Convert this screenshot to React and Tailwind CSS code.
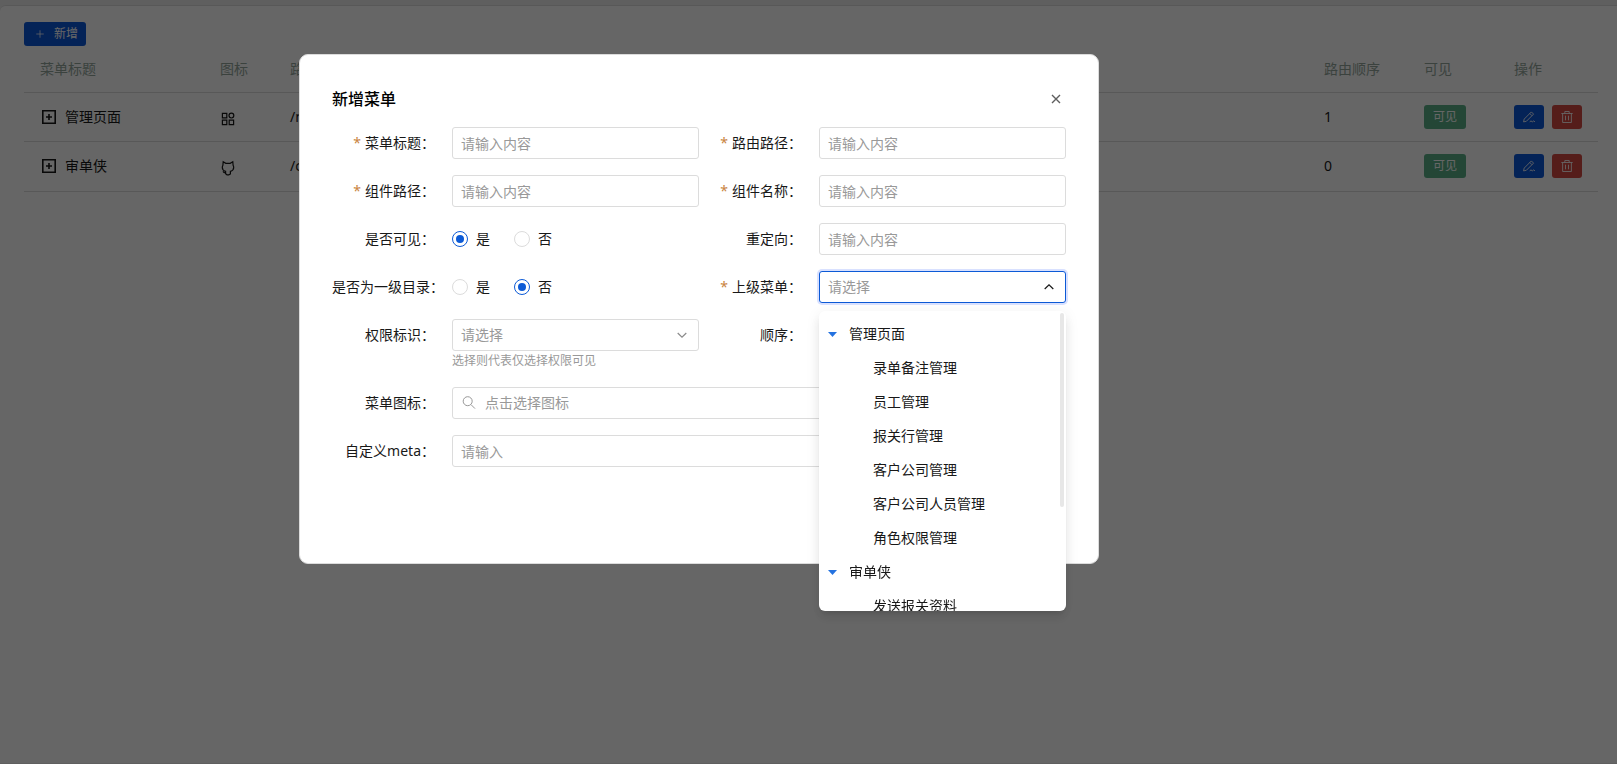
import { useState } from 'react'

const ROWS = [
  { title: '管理页面', icon: 'app', path: '/m', order: 1 },
  { title: '审单侠', icon: 'cat', path: '/c', order: 0 },
]

const TREE = [
  {
    label: '管理页面',
    children: ['录单备注管理', '员工管理', '报关行管理', '客户公司管理', '客户公司人员管理', '角色权限管理'],
  },
  { label: '审单侠', children: ['发送报关资料'] },
]

const INPUT = 'w-full h-8 px-2 rounded-[3px] border border-[#dcdcdc] bg-white text-sm text-[#181818] placeholder:text-[#999] outline-none'

function Svg({ className, width = 1, children }) {
  return (
    <svg viewBox="0 0 16 16" fill="none" stroke="currentColor" strokeWidth={width} className={className} aria-hidden="true">
      {children}
    </svg>
  )
}

const PlusIcon = () => (
  <Svg className="w-3 h-3"><path d="M8 3v10M3 8h10" /></Svg>
)
const ExpandIcon = () => (
  <Svg className="w-4 h-4" width={1.6}><path d="M1.8 1.8h12.4v12.4H1.8zM8 5v6M5 8h6" /></Svg>
)
const AppIcon = () => (
  <Svg className="w-4 h-4" width={1.2}>
    <path d="M2.4 2.4h4.4v4.4H2.4zM9.2 9.2h4.4v4.4H9.2zM2.4 9.2h4.4v4.4H2.4z" />
    <circle cx="11.4" cy="4.6" r="2.4" />
  </Svg>
)
const CatIcon = () => (
  <Svg className="w-4 h-4" width={1.2}>
    <path d="M3.2 1.8l2.6 1.5h4.4l2.600-1.500.3 3.500c.4.700.6 1.400.6 2.200 0 2-1.300 3.300-3.300 3.800v2.600L8.800 14.800H7l-1.400-1V11.300c-2-.5-3.300-1.800-3.300-3.800 0-.8.2-1.500.6-2.200zM5.600 12.900c-1.400.1-2-.4-2.600-1.500" />
  </Svg>
)
const EditIcon = () => (
  <Svg className="w-3.5 h-3.5">
    <path d="M1.800 13.600l.7-3.200 8.200-8.200 2.500 2.500L5 12.900zM8.900 4l2.500 2.500M8.800 13.500l1.500-1 1.500 1 1.500-1 1.500 1" />
  </Svg>
)
const TrashIcon = () => (
  <Svg className="w-3.5 h-3.5">
    <path d="M1.500 4h13M5.500 4V1.700h5V4M3 4v10.300h10V4M6.300 6.500v5.300M9.700 6.500v5.300" />
  </Svg>
)
const SearchIcon = () => (
  <Svg className="w-4 h-4"><circle cx="6.700" cy="6.200" r="4.500" /><path d="M10 9.600l4 4" /></Svg>
)
const CloseIcon = () => (
  <Svg className="w-4 h-4" width={1.400}><path d="M4 4l8 8M12 4l-8 8" /></Svg>
)
const ChevronIcon = ({ up }) => (
  <Svg className="w-4 h-4" width={1.200}><path d={up ? 'M3.700 10L8 5.800l4.300 4.200' : 'M3.700 6L8 10.200 12.300 6'} /></Svg>
)

function MenuTable() {
  return (
    <table className="w-full table-fixed border-collapse text-left text-sm text-[#181818]">
      <colgroup>
        <col className="w-[180px]" />
        <col className="w-[70px]" />
        <col />
        <col className="w-[100px]" />
        <col className="w-[90px]" />
        <col className="w-[100px]" />
      </colgroup>
      <thead>
        <tr className="h-[46px] border-b border-[#dcdcdc] text-[#93a69c]">
          {['菜单标题', '图标', '路由路径', '路由顺序', '可见', '操作'].map(h => (
            <th key={h} className="px-4 font-normal whitespace-nowrap">{h}</th>
          ))}
        </tr>
      </thead>
      <tbody>
        {ROWS.map(row => (
          <tr key={row.title} className="h-[49px] border-b border-[#dcdcdc] last:h-[50px]">
            <td className="px-4">
              <div className="flex items-center gap-2">
                <button type="button" aria-label="展开" className="flex pl-px"><ExpandIcon /></button>
                {row.title}
              </div>
            </td>
            <td className="px-4 pt-1">{row.icon === 'app' ? <AppIcon /> : <CatIcon />}</td>
            <td className="px-4">{row.path}</td>
            <td className="px-4">{row.order}</td>
            <td className="px-4">
              <span className="flex h-6 w-[42px] items-center justify-center rounded-[3px] bg-[#5ab088] text-xs text-white">可见</span>
            </td>
            <td className="px-4">
              <div className="flex gap-2">
                <button type="button" aria-label="编辑" className="flex h-6 w-[30px] shrink-0 items-center justify-center rounded-[3px] bg-[#0c57d9] text-white"><EditIcon /></button>
                <button type="button" aria-label="删除" className="flex h-6 w-[30px] shrink-0 items-center justify-center rounded-[3px] bg-[#d54941] text-white"><TrashIcon /></button>
              </div>
            </td>
          </tr>
        ))}
      </tbody>
    </table>
  )
}

function Field({ id, label, required, wide, help, children }) {
  return (
    <div className={wide ? 'col-span-2 flex' : 'flex'}>
      <label htmlFor={id} className="h-8 w-[120px] shrink-0 pr-[17px] text-right leading-8 whitespace-nowrap">
        {required && <span className="mr-1 text-[#c9843f]">*</span>}
        {label}：
      </label>
      <div className="relative min-w-0 flex-1">
        {children}
        {help && <p className="text-xs leading-5 text-[#999]">{help}</p>}
      </div>
    </div>
  )
}

function TextField({ id, placeholder = '请输入内容', ...field }) {
  return (
    <Field id={id} {...field}>
      <input id={id} type="text" placeholder={placeholder} className={INPUT} />
    </Field>
  )
}

function YesNo({ name, label, initial }) {
  const [value, setValue] = useState(initial)
  return (
    <Field id={`${name}-是`} label={label}>
      <div className="flex h-8 items-center gap-6">
        {['是', '否'].map(opt => (
          <label key={opt} className="flex items-center gap-2">
            <input
              id={`${name}-${opt}`}
              type="radio"
              name={name}
              checked={value === opt}
              onChange={() => setValue(opt)}
              className="grid h-4 w-4 appearance-none place-items-center rounded-full border border-[#dcdcdc] bg-white before:h-2 before:w-2 before:rounded-full checked:border-[#0c5ad6] checked:before:bg-[#0c5ad6]"
            />
            {opt}
          </label>
        ))}
      </div>
    </Field>
  )
}

function TreeMenu() {
  return (
    <div className="absolute top-10 left-0 z-10 h-[300px] w-full overflow-hidden rounded-md bg-white py-1.5 shadow-[0_3px_14px_2px_rgba(0,0,0,0.05),0_8px_10px_1px_rgba(0,0,0,0.06),0_5px_5px_-3px_rgba(0,0,0,0.1)]">
      <ul>
        {TREE.map(node => (
          <li key={node.label}>
            <div className="flex h-[34px] items-center gap-3 pl-[9px]">
              <svg viewBox="0 0 9 5" className="h-[5px] w-[9px] fill-[#2472e0]" aria-hidden="true"><path d="M0 0h9L4.500 5z" /></svg>
              {node.label}
            </div>
            <ul>
              {node.children.map(c => (
                <li key={c} className="h-[34px] pl-[54px] leading-[34px]">{c}</li>
              ))}
            </ul>
          </li>
        ))}
      </ul>
      <div className="absolute top-0.5 right-0.5 h-[194px] w-1 rounded-full bg-[#e7e7e7]" />
    </div>
  )
}

function MenuDialog() {
  return (
    <div role="dialog" aria-labelledby="dialog-title" className="w-full max-w-[800px] self-start rounded-[9px] border border-[#dcdcdc] bg-white px-8 pt-8 pb-24 text-sm text-[#181818]">
      <div className="mb-4 flex h-6 items-center justify-between">
        <h2 id="dialog-title" className="text-base font-medium text-black">新增菜单</h2>
        <button type="button" aria-label="关闭" className="p-0.5 text-[#5e5e5e]"><CloseIcon /></button>
      </div>
      <form className="grid grid-cols-2 gap-y-4">
        <TextField id="title" label="菜单标题" required />
        <TextField id="path" label="路由路径" required />
        <TextField id="component" label="组件路径" required />
        <TextField id="name" label="组件名称" required />
        <YesNo name="visible" label="是否可见" initial="是" />
        <TextField id="redirect" label="重定向" />
        <YesNo name="root" label="是否为一级目录" initial="否" />
        <Field id="parent" label="上级菜单" required>
          <select id="parent" defaultValue="" className="h-8 w-full appearance-none rounded-[3px] border border-[#0c5ad6] bg-white px-2 text-sm text-[#999] shadow-[0_0_0_2px_#d9e1ff] outline-none">
            <option value="">请选择</option>
          </select>
          <span className="pointer-events-none absolute top-2 right-[9px] text-[#181818]"><ChevronIcon up /></span>
          <TreeMenu />
        </Field>
        <Field id="permission" label="权限标识" help="选择则代表仅选择权限可见">
          <select id="permission" defaultValue="" className="h-8 w-full appearance-none rounded-[3px] border border-[#dcdcdc] bg-white px-2 text-sm text-[#999] outline-none">
            <option value="">请选择</option>
          </select>
          <span className="pointer-events-none absolute top-2 right-[9px] text-[#8b8b8b]"><ChevronIcon /></span>
        </Field>
        <TextField id="order" label="顺序" placeholder="" />
        <Field id="icon" label="菜单图标" wide>
          <div className="flex h-8 items-center gap-2 rounded-[3px] border border-[#dcdcdc] px-2 text-[#999]">
            <SearchIcon />
            <input id="icon" type="text" placeholder="点击选择图标" className="min-w-0 flex-1 text-sm outline-none placeholder:text-[#999]" />
          </div>
        </Field>
        <TextField id="meta" label="自定义meta" placeholder="请输入" wide />
      </form>
    </div>
  )
}

export default function App() {
  return (
    <div className="relative min-h-screen bg-[#eee] pt-[5px] pb-px font-['Noto_Sans','Noto_Sans_CJK_SC',sans-serif]">
      <main className="min-h-[calc(100vh-6px)] rounded-tl-md border-t border-[#dcdcdc] bg-white pt-4 pr-[19px] pl-6">
        <button type="button" className="flex h-6 items-center gap-2 rounded-[3px] bg-[#0c57d9] pr-2 pl-2.5 text-xs text-white">
          <PlusIcon />
          新增
        </button>
        <MenuTable />
      </main>
      <div className="fixed inset-0 flex justify-center bg-black/60 pt-[54px] pr-[219px]">
        <MenuDialog />
      </div>
    </div>
  )
}
